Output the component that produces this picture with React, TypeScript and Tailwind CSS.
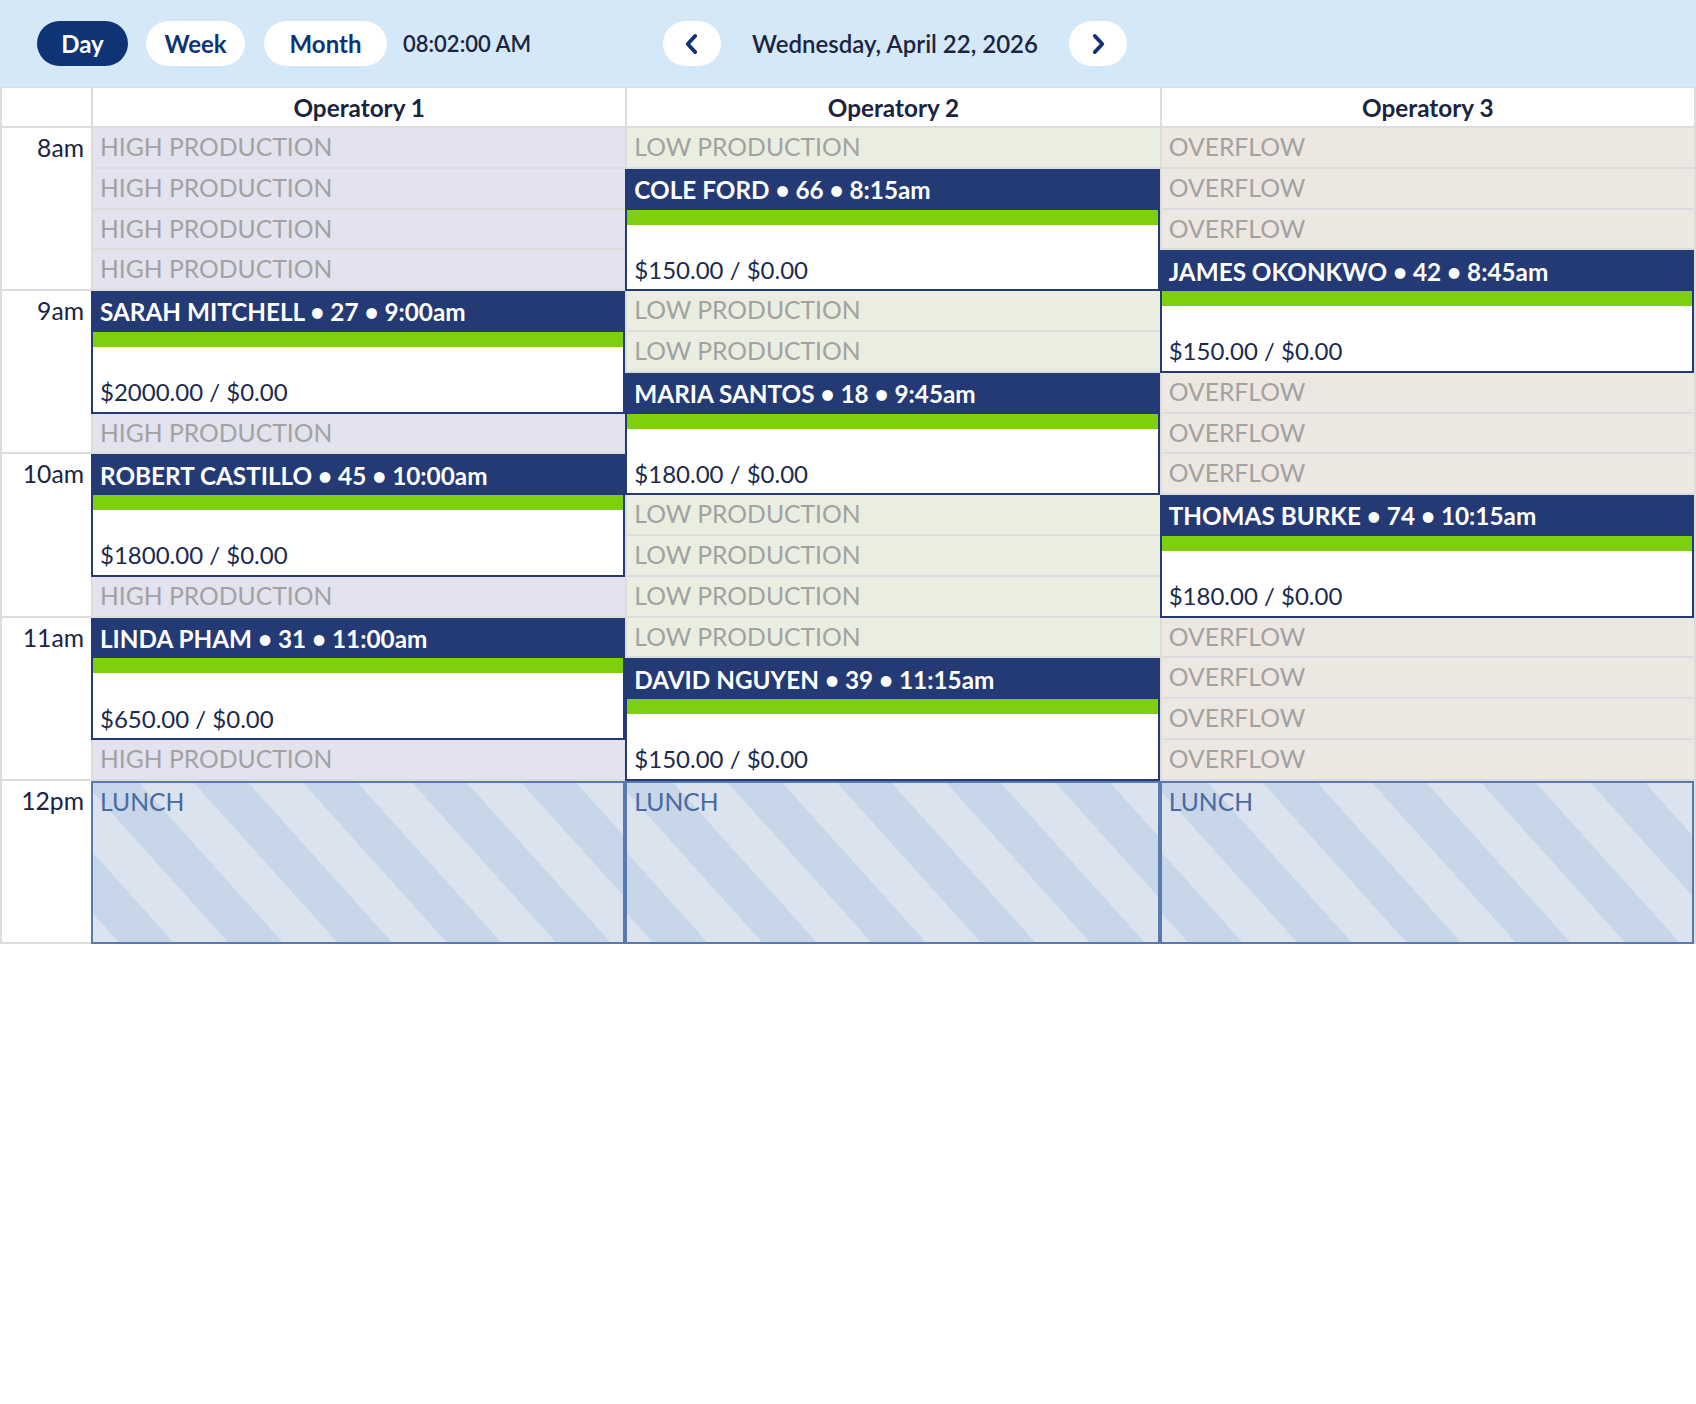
import React from "react";

type Slot = { kind: "slot"; label: string; bg: string };
type Appt = { kind: "appt"; title: string; price: string };
type Lunch = { kind: "lunch" };
type Cell = Slot | Appt | Lunch;

const H: Slot = { kind: "slot", label: "HIGH PRODUCTION", bg: "bg-[#e3e3ef]" };
const L: Slot = { kind: "slot", label: "LOW PRODUCTION", bg: "bg-[#eaeee0]" };
const O: Slot = { kind: "slot", label: "OVERFLOW", bg: "bg-[#ede7e1]" };
const LUNCH: Lunch = { kind: "lunch" };

const a = (title: string, price: string): Appt => ({ kind: "appt", title, price });

const columns: { name: string; cells: Cell[] }[] = [
  {
    name: "Operatory 1",
    cells: [
      H, H, H, H,
      a("SARAH MITCHELL • 27 • 9:00am", "$2000.00 / $0.00"),
      H,
      a("ROBERT CASTILLO • 45 • 10:00am", "$1800.00 / $0.00"),
      H,
      a("LINDA PHAM • 31 • 11:00am", "$650.00 / $0.00"),
      H,
      LUNCH,
    ],
  },
  {
    name: "Operatory 2",
    cells: [
      L,
      a("COLE FORD • 66 • 8:15am", "$150.00 / $0.00"),
      L, L,
      a("MARIA SANTOS • 18 • 9:45am", "$180.00 / $0.00"),
      L, L, L, L,
      a("DAVID NGUYEN • 39 • 11:15am", "$150.00 / $0.00"),
      LUNCH,
    ],
  },
  {
    name: "Operatory 3",
    cells: [
      O, O, O,
      a("JAMES OKONKWO • 42 • 8:45am", "$150.00 / $0.00"),
      O, O, O,
      a("THOMAS BURKE • 74 • 10:15am", "$180.00 / $0.00"),
      O, O, O, O,
      LUNCH,
    ],
  },
];

const hours = ["8am", "9am", "10am", "11am", "12pm"];

function Chevron({ dir }: { dir: "left" | "right" }) {
  return (
    <svg width="26" height="26" viewBox="0 0 24 24" fill="none">
      <path
        d={dir === "left" ? "M15 4.5 L8 12 L15 19.5" : "M9 4.5 L16 12 L9 19.5"}
        stroke="#0f3476"
        strokeWidth="3.4"
        strokeLinecap="round"
        strokeLinejoin="round"
      />
    </svg>
  );
}

function CellView({ cell }: { cell: Cell }) {
  if (cell.kind === "slot") {
    return (
      <div
        className={`flex h-[40.8px] items-center border-b-2 border-l-2 border-b-[#dcdcdf] border-l-[#dcdcdc] pl-[7px] text-[24.7px] leading-none text-[#a2a2a2] ${cell.bg}`}
      >
        {cell.label}
      </div>
    );
  }
  if (cell.kind === "appt") {
    return (
      <div className="flex h-[122.4px] flex-col border-2 border-[#243a75] bg-white">
        <div className="flex h-[38.8px] items-center bg-[#243a75] pl-[7px] text-[24.3px] font-bold leading-none text-white">
          {cell.title}
        </div>
        <div className="h-[15px] bg-[#7ecf10]" />
        <div className="flex flex-1 items-end">
          <div className="flex h-[38.8px] items-center pl-[7px] text-[24px] leading-none text-[#1b2a4e]">
            {cell.price}
          </div>
        </div>
      </div>
    );
  }
  return (
    <div className="h-[163.2px] border-2 border-[#5a79ae] bg-[image:repeating-linear-gradient(48deg,#dbe3ef_0px,#dbe3ef_19px,#c8d6ea_19px,#c8d6ea_59.6px,#dbe3ef_59.6px,#dbe3ef_81.2px)]">
      <div className="flex h-[38.8px] items-center pl-[7px] text-[24.7px] leading-none text-[#4a6aa0]">
        LUNCH
      </div>
    </div>
  );
}

export default function App() {
  return (
    <div className="w-[1696px] bg-white font-['Lato','Noto_Sans',sans-serif] text-[#1b2440]">
      {/* Top bar */}
      <div className="flex h-[87px] items-center bg-[#d5e8f8] pl-[37px]">
        <div className="flex w-[626px] items-center">
          <button className="flex h-[45px] w-[91px] items-center justify-center rounded-full bg-[#0f3476] text-[24px] font-bold text-white">
            Day
          </button>
          <button className="ml-[18px] flex h-[45px] w-[99px] items-center justify-center rounded-full bg-white text-[24px] font-bold text-[#0f3476]">
            Week
          </button>
          <button className="ml-[19px] flex h-[45px] w-[123px] items-center justify-center rounded-full bg-white text-[24px] font-bold text-[#0f3476]">
            Month
          </button>
          <span className="ml-[16px] text-[22px] font-semibold text-[#1b2440]">08:02:00 AM</span>
        </div>
        <button className="flex h-[45px] w-[58px] items-center justify-center rounded-full bg-white">
          <Chevron dir="left" />
        </button>
        <div className="flex w-[348px] justify-center text-[24px] font-semibold text-[#1b2440]">
          Wednesday, April 22, 2026
        </div>
        <button className="flex h-[45px] w-[58px] items-center justify-center rounded-full bg-white">
          <Chevron dir="right" />
        </button>
      </div>

      {/* Schedule grid */}
      <div className="grid grid-cols-[91px_1fr_1fr_1fr] border-r-2 border-t border-r-[#dcdcdc] border-t-[#dcdcdc]">
        {/* header row */}
        <div className="h-[40px] border-b-2 border-l-2 border-[#dcdcdc] bg-white" />
        {columns.map((c) => (
          <div
            key={c.name}
            className="flex h-[40px] items-center justify-center border-b-2 border-l-2 border-[#dcdcdc] bg-white pt-[2px] text-[24.3px] font-bold text-[#1b2440]"
          >
            {c.name}
          </div>
        ))}

        {/* time column */}
        <div className="flex flex-col border-l-2 border-[#dcdcdc]">
          {hours.map((h) => (
            <div key={h} className="h-[163.2px] border-b-2 border-[#dcdcdc]">
              <div className="flex h-[40.8px] items-center justify-end pr-[7px] text-[24.7px] leading-none text-[#1b2440]">
                {h}
              </div>
            </div>
          ))}
        </div>

        {columns.map((c) => (
          <div key={c.name} className="flex flex-col">
            {c.cells.map((cell, i) => (
              <CellView key={i} cell={cell} />
            ))}
          </div>
        ))}
      </div>
    </div>
  );
}
